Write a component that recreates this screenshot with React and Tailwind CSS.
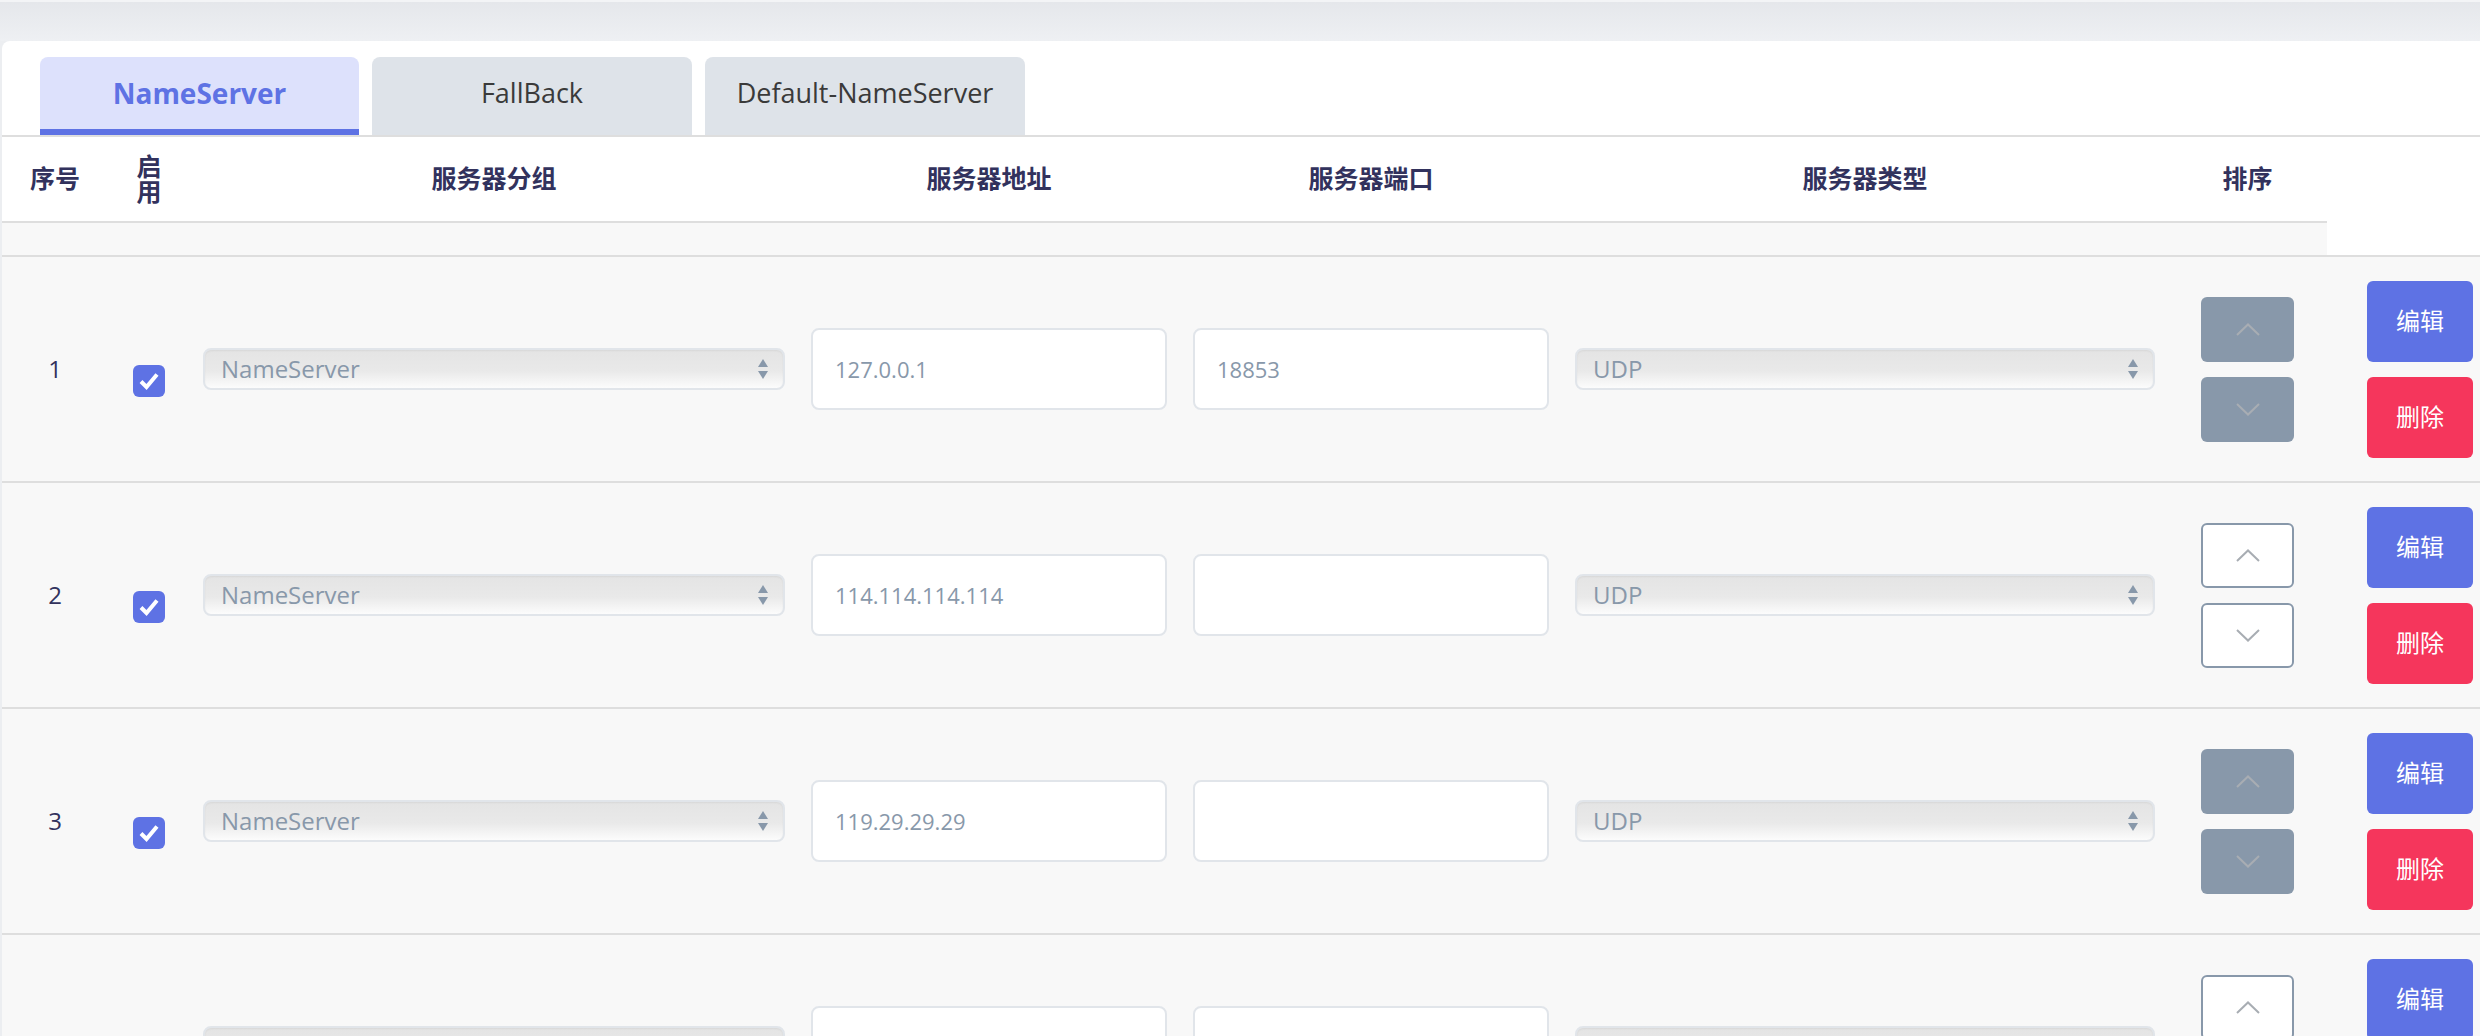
import React from 'react';

const rows = [
  { id: 1, addr: '127.0.0.1', port: '18853', locked: true },
  { id: 2, addr: '114.114.114.114', port: '', locked: false },
  { id: 3, addr: '119.29.29.29', port: '', locked: true },
  { id: 4, addr: '', port: '', locked: false },
];

const tabs = ['NameServer', 'FallBack', 'Default-NameServer'];

function Chevron({ up }) {
  return (
    <svg width="24" height="13" viewBox="0 0 24 13" fill="none">
      <path
        d={up ? 'M1 12L12 1.5L23 12' : 'M1 1L12 11.5L23 1'}
        stroke="#a8adb3"
        strokeWidth="2"
      />
    </svg>
  );
}

function FakeSelect({ value }) {
  return (
    <div className="relative flex h-[42px] w-full items-center rounded-lg border-2 border-[#e1e5ea] bg-[linear-gradient(180deg,#e4e4e4_0%,#e9e9e9_55%,#fcfcfc_100%)] pl-[16px] text-[24px] text-[#8898aa] shadow-[inset_0_1px_2px_rgba(0,0,0,0.06)]">
      {value}
      <svg className="absolute right-[14px] top-1/2 -translate-y-1/2" width="12" height="22" viewBox="0 0 12 22">
        <path d="M6 1L11 9H1Z" fill="#8898aa" />
        <path d="M6 21L11 13H1Z" fill="#8898aa" />
      </svg>
    </div>
  );
}

function OrderButton({ up, locked }) {
  return (
    <button
      className={`flex h-[65px] w-[93px] items-center justify-center rounded-md ${
        locked ? 'bg-[#8898aa]' : 'border-2 border-[#8898aa] bg-white'
      }`}
    >
      <Chevron up={up} />
    </button>
  );
}

export default function App() {
  return (
    <div className="h-screen overflow-hidden bg-[#eceef1] font-['Open_Sans','Noto_Sans_CJK_SC',sans-serif]">
      <div className="h-[41px] border-t-2 border-[#f3f4f6] bg-[linear-gradient(180deg,#e5e7eb_0%,#eef0f3_100%)]" />

      <div className="ml-[2px] rounded-tl-lg bg-white">
        <div className="flex gap-[13px] border-b-2 border-[#dedede] pl-[38px] pt-4">
          {tabs.map((t, i) => (
            <div
              key={t}
              className={`relative flex h-[78px] items-center justify-center rounded-t-lg ${
                i === 0
                  ? 'w-[319px] bg-[#dde1fc] text-[28px] font-bold text-[#5e72e4]'
                  : 'w-[320px] bg-[#dee3e9] text-[27px] text-[#3a3a3a]'
              }`}
            >
              <span className="-mt-[6px]">{t}</span>
              {i === 0 && <div className="absolute bottom-0 left-0 h-[6px] w-full bg-[#5e72e4]" />}
            </div>
          ))}
        </div>

        <div className="flex h-[86px] w-[2325px] items-center border-b-2 border-[#dedede] text-[25px] font-bold text-[#32325d]">
          <div className="w-[106px] text-center">序号</div>
          <div className="flex w-[82px] flex-col items-center leading-[25px]">
            <span>启</span>
            <span>用</span>
          </div>
          <div className="w-[608px] text-center">服务器分组</div>
          <div className="w-[382px] text-center">服务器地址</div>
          <div className="w-[382px] text-center">服务器端口</div>
          <div className="w-[606px] text-center">服务器类型</div>
          <div className="w-[159px] text-center">排序</div>
        </div>
        <div className="h-8 w-[2325px] bg-[#f8f8f8]" />

        {rows.map((r) => (
          <div key={r.id} className="flex h-[226px] items-center border-t-2 border-[#dedede] bg-[#f8f8f8]">
            <div className="w-[106px] text-center text-[24px] text-[#32325d]">{r.id}</div>
            <div className="flex w-[82px] justify-center">
              <div className="mt-6 flex h-8 w-8 items-center justify-center rounded-md bg-[#5e72e4]">
                <svg width="20" height="18" viewBox="0 0 20 18">
                  <path d="M2 9.5L7.5 15L18 2.5" fill="none" stroke="#fff" strokeWidth="4" />
                </svg>
              </div>
            </div>
            <div className="w-[608px] px-[13px]">
              <FakeSelect value="NameServer" />
            </div>
            <div className="w-[382px] px-[13px]">
              <div className="flex h-[82px] items-center rounded-lg border-2 border-[#e1e5ea] bg-white pl-[22px] text-[22px] text-[#8898aa]">
                {r.addr}
              </div>
            </div>
            <div className="w-[382px] px-[13px]">
              <div className="flex h-[82px] items-center rounded-lg border-2 border-[#e1e5ea] bg-white pl-[22px] text-[22px] text-[#8898aa]">
                {r.port}
              </div>
            </div>
            <div className="w-[606px] px-[13px]">
              <FakeSelect value="UDP" />
            </div>
            <div className="flex w-[159px] flex-col items-center gap-[15px]">
              <OrderButton up locked={r.locked} />
              <OrderButton locked={r.locked} />
            </div>
            <div className="flex flex-col gap-[15px] pl-[40px]">
              <button className="flex h-[81px] w-[106px] items-center justify-center rounded-md bg-[#5e72e4] text-[24px] text-white">
                编辑
              </button>
              <button className="flex h-[81px] w-[106px] items-center justify-center rounded-md bg-[#f5365c] text-[24px] text-white">
                删除
              </button>
            </div>
          </div>
        ))}
      </div>
    </div>
  );
}
